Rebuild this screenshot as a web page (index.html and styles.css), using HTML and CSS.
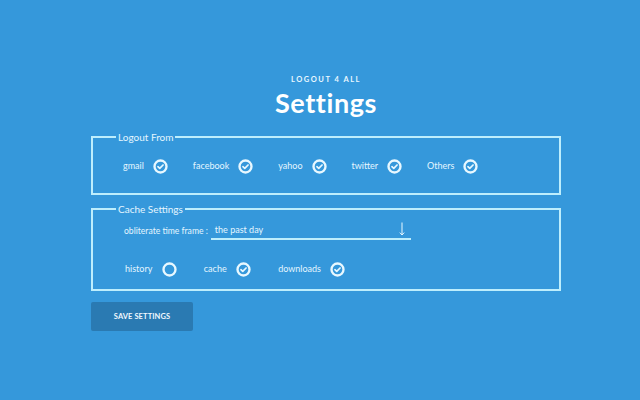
FILE: index.html
```html
<!DOCTYPE html>
<html>
<head>
<meta charset="utf-8">
<link rel="stylesheet" href="styles.css">
</head>
<body>
<div class="page">
  <header class="head">
    <div class="brand">LOGOUT 4 ALL</div>
    <h1 class="title">Settings</h1>
  </header>

  <fieldset class="group group-logout">
    <legend class="legend">Logout From</legend>
    <div class="row row-logout">
      <div class="item"><span class="label">gmail</span><span class="check on"><svg viewBox="0 0 14 14"><circle cx="7" cy="7" r="5.6"/><path d="M4.6 7.2 L6.3 8.8 L9.4 5.6"/></svg></span></div>
      <div class="item"><span class="label">facebook</span><span class="check on"><svg viewBox="0 0 14 14"><circle cx="7" cy="7" r="5.6"/><path d="M4.6 7.2 L6.3 8.8 L9.4 5.6"/></svg></span></div>
      <div class="item"><span class="label">yahoo</span><span class="check on"><svg viewBox="0 0 14 14"><circle cx="7" cy="7" r="5.6"/><path d="M4.6 7.2 L6.3 8.8 L9.4 5.6"/></svg></span></div>
      <div class="item"><span class="label">twitter</span><span class="check on"><svg viewBox="0 0 14 14"><circle cx="7" cy="7" r="5.6"/><path d="M4.6 7.2 L6.3 8.8 L9.4 5.6"/></svg></span></div>
      <div class="item"><span class="label">Others</span><span class="check on"><svg viewBox="0 0 14 14"><circle cx="7" cy="7" r="5.6"/><path d="M4.6 7.2 L6.3 8.8 L9.4 5.6"/></svg></span></div>
    </div>
  </fieldset>

  <fieldset class="group group-cache">
    <legend class="legend">Cache Settings</legend>
    <div class="frame">
      <span class="label frame-label">obliterate time frame :</span>
      <div class="select"><span class="select-value">the past day</span><svg class="arrow" viewBox="0 0 8 16"><path d="M4 1.5 V14 M1.8 11.6 L4 14 L6.2 11.6"/></svg></div>
    </div>
    <div class="row row-cache">
      <div class="item"><span class="label">history</span><span class="check"><svg viewBox="0 0 14 14"><circle cx="7" cy="7" r="5.6"/></svg></span></div>
      <div class="item"><span class="label">cache</span><span class="check on"><svg viewBox="0 0 14 14"><circle cx="7" cy="7" r="5.6"/><path d="M4.6 7.2 L6.3 8.8 L9.4 5.6"/></svg></span></div>
      <div class="item"><span class="label">downloads</span><span class="check on"><svg viewBox="0 0 14 14"><circle cx="7" cy="7" r="5.6"/><path d="M4.6 7.2 L6.3 8.8 L9.4 5.6"/></svg></span></div>
    </div>
  </fieldset>

  <div class="actions">
    <button class="save">SAVE SETTINGS</button>
  </div>
</div>
</body>
</html>
```

FILE: styles.css
```css
html, body {
  margin: 0;
  padding: 0;
}
body {
  background: #3598db;
  color: #e4f6ff;
  font-family: Lato, "Open Sans", "Liberation Sans", sans-serif;
  width: 640px;
  height: 400px;
  overflow: hidden;
}
.page {
  display: flex;
  flex-direction: column;
  padding: 75px 79px 0 91px;
}
.head {
  display: flex;
  flex-direction: column;
  align-items: center;
}
.brand {
  font-size: 7.5px;
  font-weight: 700;
  letter-spacing: 1.5px;
  line-height: 10px;
  color: #e8f7ff;
}
.title {
  margin: 3px 0 0;
  font-size: 27px;
  font-weight: 700;
  line-height: 30px;
  color: #ffffff;
  letter-spacing: 0.6px;
}
.group {
  margin: 0;
  padding: 0;
  border: 2px solid #bdeefd;
  min-width: 0;
}
.group-logout {
  margin-top: 13px;
  height: 64px;
  box-sizing: border-box;
}
.group-cache {
  margin-top: 8px;
  height: 88px;
  box-sizing: border-box;
}
.legend {
  margin-left: 23px;
  padding: 0 2px;
  font-size: 10px;
  line-height: 12px;
  color: #e4f6ff;
}
.row {
  display: flex;
  align-items: center;
}
.row-logout {
  padding: 15px 0 0 30px;
  gap: 25px;
}
.row-cache {
  padding: 21px 0 0 32px;
  gap: 27px;
}
.item {
  display: flex;
  align-items: center;
  gap: 9px;
}
.row-cache .item {
  gap: 9.5px;
}
.label {
  font-size: 9px;
  line-height: 16px;
  color: #e4f6ff;
}
.frame-label {
  font-size: 8.6px;
}
.check {
  display: block;
  width: 15px;
  height: 15px;
}
.check svg {
  display: block;
  width: 15px;
  height: 15px;
  fill: none;
  stroke: #e8f8ff;
  stroke-width: 2.2;
  stroke-linecap: round;
  stroke-linejoin: round;
}
.check svg path {
  stroke-width: 1.6;
}
.frame {
  display: flex;
  align-items: center;
  padding: 7px 0 0 31px;
  gap: 3px;
}
.select {
  display: flex;
  align-items: center;
  justify-content: space-between;
  width: 200px;
  box-sizing: border-box;
  height: 18px;
  border-bottom: 2px solid #bdeefd;
  padding: 0 5px 0 4px;
}
.select-value {
  font-size: 9px;
  line-height: 16px;
  color: #e4f6ff;
}
.arrow {
  display: block;
  width: 8px;
  height: 16px;
  fill: none;
  stroke: #e8f8ff;
  stroke-width: 1;
  margin-top: -3px;
}
.actions {
  display: flex;
  margin-top: 11px;
}
.save {
  width: 102px;
  height: 29px;
  border: none;
  border-radius: 2px;
  background: #2a7ab2;
  color: #f0f8ff;
  font-family: Lato, "Open Sans", "Liberation Sans", sans-serif;
  font-size: 7.5px;
  font-weight: 700;
  letter-spacing: 0.1px;
  padding: 0;
}
```
